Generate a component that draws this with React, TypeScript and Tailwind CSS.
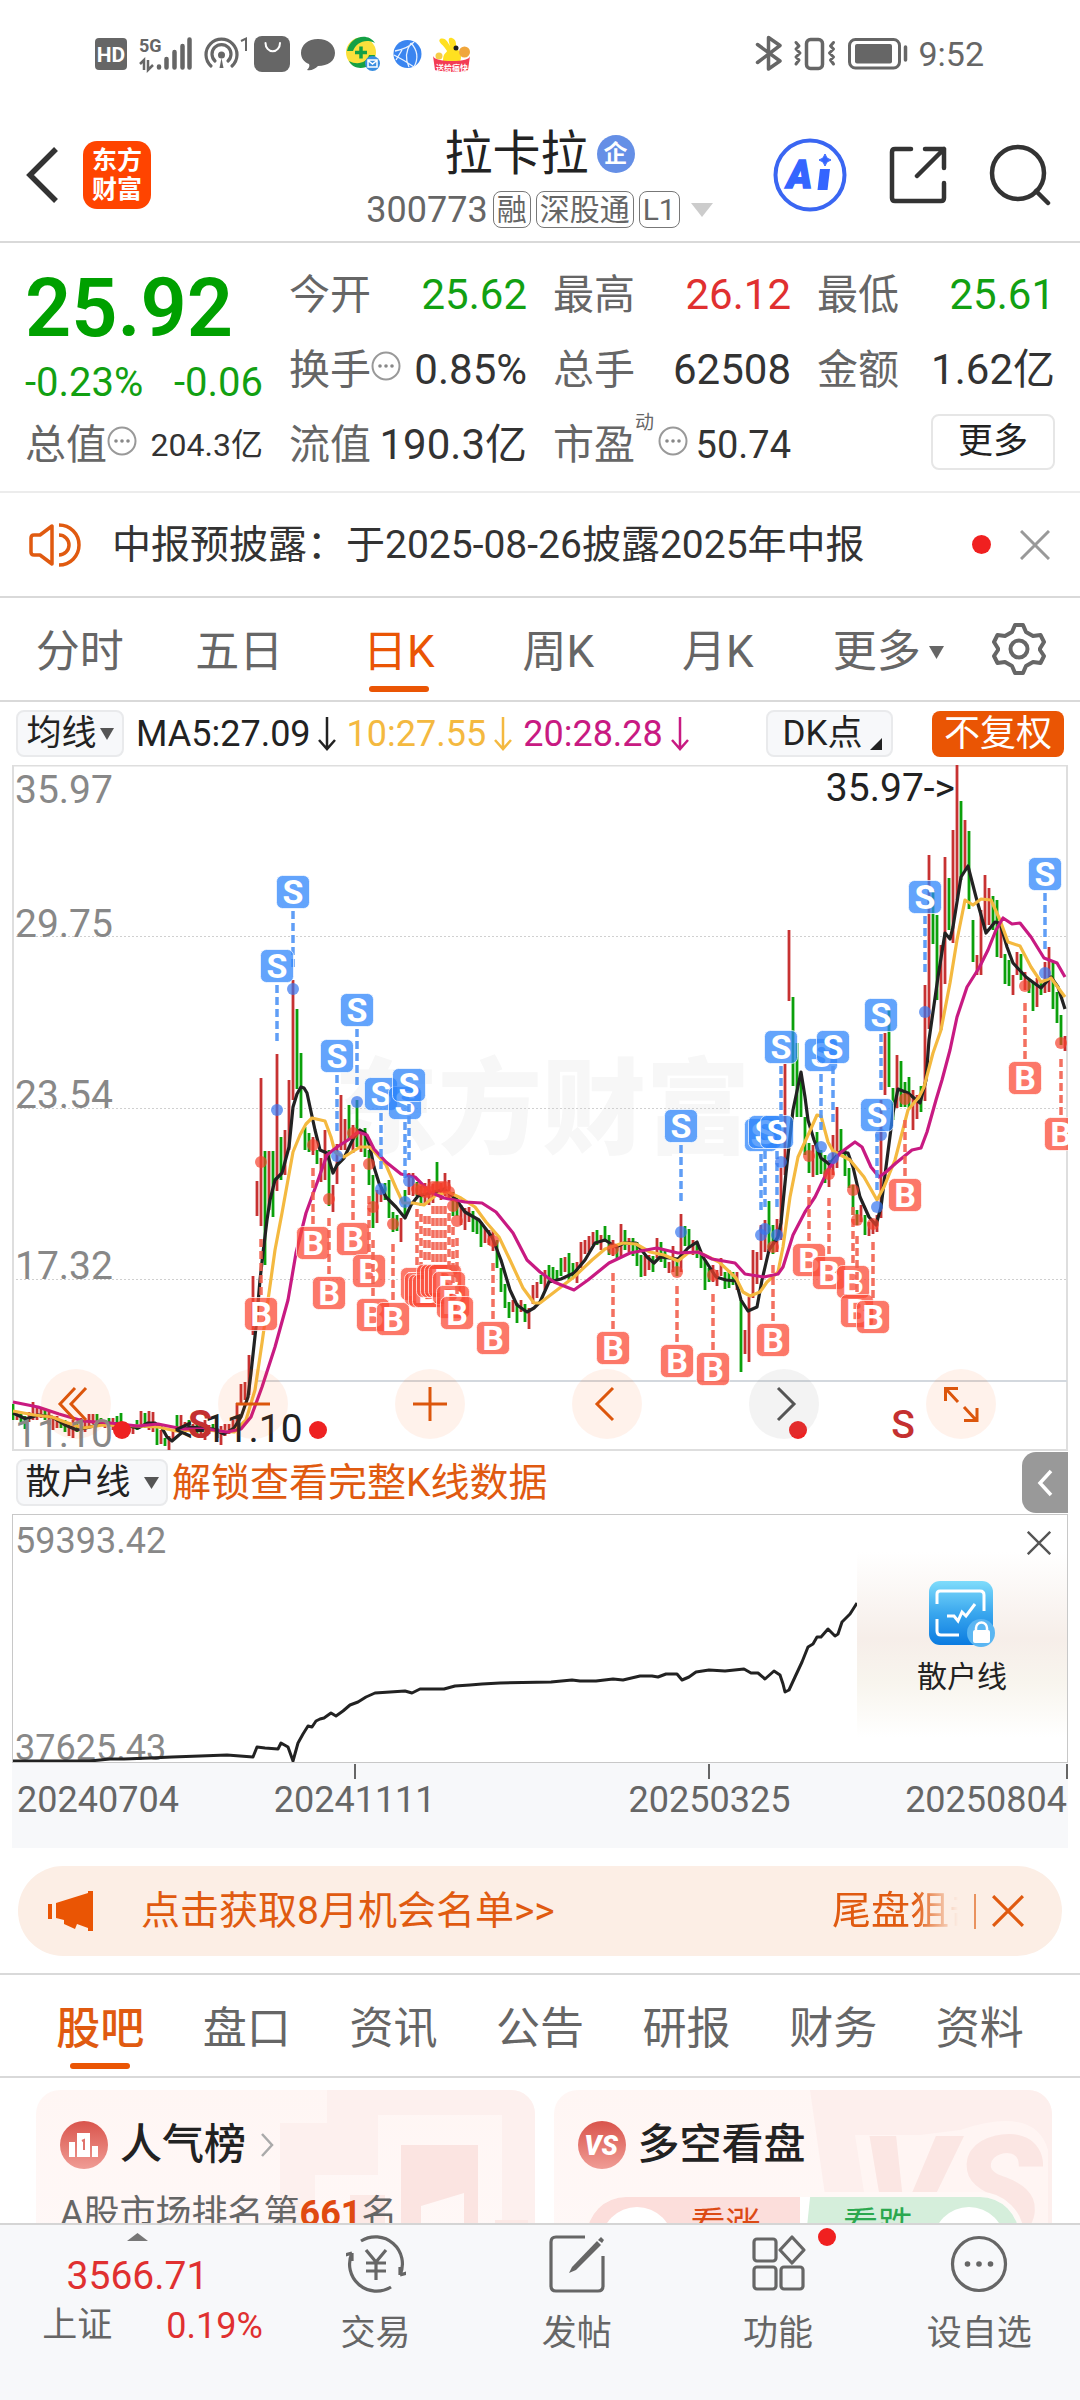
import React from "react";
import type { ReactNode } from "react";

/* ---------- K-line data: x, high, low, direction ---------- */
const CANDLES =
  "13,1404,1420,g 17,1412,1420,r 21,1412,1422,g 25,1416,1429,g 29,1412,1422,r 33,1402,1420,r 37,1408,1420,r 41,1407,1418,r 45,1410,1420,g 49,1412,1425,r 53,1418,1430,r 57,1416,1428,r 61,1420,1428,g 65,1420,1432,g 69,1422,1436,r 73,1420,1438,r 77,1424,1432,g 81,1418,1430,r 85,1420,1432,r 89,1414,1428,r 93,1414,1424,r 97,1414,1426,g 101,1418,1426,g 105,1420,1428,r 109,1418,1426,g 113,1418,1430,r 117,1416,1428,g 121,1413,1430,g 125,1422,1432,r 129,1424,1432,r 133,1426,1434,r 137,1420,1430,g 141,1411,1426,r 145,1413,1428,g 149,1411,1430,r 153,1412,1432,r 157,1425,1445,g 161,1430,1444,r 165,1438,1446,g 169,1436,1450,r 173,1430,1440,r 177,1415,1430,g 181,1415,1430,r 185,1422,1434,r 189,1420,1432,g 193,1424,1432,r 197,1422,1434,g 201,1424,1438,r 205,1420,1440,r 209,1425,1434,r 213,1424,1432,g 217,1428,1438,r 221,1426,1445,r 225,1424,1436,r 229,1424,1434,r 233,1420,1430,r 237,1403,1424,r 241,1384,1404,r 245,1382,1400,r 249,1355,1395,r 253,1276,1335,r 257,1181,1216,r 261,1078,1226,r 265,1151,1265,g 269,1151,1210,r 273,1151,1217,g 277,1054,1191,r 281,1137,1180,g 285,1130,1175,r 289,1080,1150,r 293,980,1100,r 297,1009,1089,g 301,1053,1118,g 305,1127,1150,g 309,1133,1152,g 313,1137,1155,r 317,1150,1164,g 321,1158,1182,r 325,1130,1180,r 329,1150,1206,g 333,1185,1212,r 337,1144,1184,r 341,1095,1150,r 345,1119,1150,r 349,1105,1140,g 353,1125,1153,r 357,1100,1147,g 361,1130,1152,r 365,1128,1157,g 369,1150,1185,g 373,1175,1228,g 377,1190,1223,r 381,1188,1202,r 385,1183,1200,g 389,1180,1218,g 393,1212,1232,g 397,1215,1231,g 401,1218,1242,r 405,1190,1218,g 409,1173,1195,r 413,1173,1196,r 417,1182,1196,g 421,1186,1206,g 425,1183,1204,r 429,1179,1205,r 433,1184,1203,r 437,1162,1195,g 441,1183,1200,r 445,1173,1196,r 449,1180,1200,r 453,1192,1216,g 457,1198,1216,g 461,1205,1225,r 465,1208,1230,r 469,1207,1222,r 473,1211,1232,g 477,1220,1234,g 481,1222,1247,g 485,1228,1243,r 489,1230,1245,r 493,1230,1251,r 497,1240,1268,g 501,1268,1292,g 505,1284,1308,g 509,1302,1318,g 513,1300,1312,r 517,1303,1323,g 521,1300,1312,r 525,1304,1322,g 529,1308,1329,r 533,1285,1304,r 537,1282,1298,r 541,1275,1284,g 545,1270,1290,r 549,1265,1282,g 553,1267,1282,g 557,1270,1280,g 561,1258,1276,g 565,1257,1272,r 569,1253,1280,g 573,1263,1278,g 577,1262,1283,r 581,1242,1268,r 585,1240,1254,r 589,1236,1252,r 593,1232,1245,r 597,1230,1245,g 601,1235,1250,r 605,1226,1242,g 609,1235,1255,g 613,1240,1256,r 617,1244,1258,g 621,1224,1256,r 625,1230,1250,g 629,1238,1252,r 633,1238,1256,g 637,1242,1266,g 641,1255,1277,g 645,1256,1276,r 649,1255,1270,r 653,1256,1272,g 657,1238,1258,r 661,1242,1262,g 665,1250,1268,g 669,1262,1273,r 673,1246,1272,r 677,1258,1276,g 681,1214,1272,r 685,1226,1246,g 689,1229,1248,g 693,1240,1255,r 697,1242,1258,g 701,1255,1268,g 705,1260,1290,g 709,1268,1282,g 713,1265,1282,r 717,1270,1286,r 721,1258,1276,r 725,1272,1289,g 729,1270,1288,g 733,1272,1285,g 737,1272,1290,r 741,1300,1372,g 745,1330,1354,r 749,1297,1362,r 753,1250,1298,r 757,1252,1284,r 761,1225,1260,r 765,1220,1252,r 769,1201,1250,g 773,1225,1254,g 777,1219,1252,r 781,1168,1240,r 785,1064,1175,r 789,930,1001,r 793,997,1086,g 797,1043,1117,g 801,1080,1117,g 805,1117,1155,g 809,1143,1173,g 813,1145,1177,r 817,1132,1175,g 821,1150,1174,g 825,1155,1183,g 829,1160,1187,r 833,1135,1175,r 837,1107,1168,r 841,1129,1152,g 845,1150,1176,g 849,1168,1188,g 853,1185,1215,g 857,1210,1225,g 861,1205,1222,r 865,1215,1235,g 869,1222,1236,r 873,1220,1234,r 877,1215,1232,r 881,1100,1218,r 885,1033,1095,r 889,1010,1087,g 893,1088,1120,g 897,1055,1108,r 901,1061,1107,g 905,1082,1107,g 909,1077,1108,g 913,1090,1130,r 917,1095,1119,r 921,1086,1112,g 925,985,1101,r 929,855,1029,r 933,890,944,g 937,915,1000,g 941,945,1030,r 945,857,984,r 949,878,930,g 953,830,943,r 957,765,900,r 961,801,880,g 965,820,870,r 969,831,909,g 973,920,962,g 977,955,975,r 981,910,975,r 985,875,930,r 989,888,925,r 993,896,930,g 997,900,957,g 1001,925,958,r 1005,954,984,g 1009,960,986,g 1013,975,995,r 1017,952,975,r 1021,954,980,g 1025,972,990,r 1029,980,993,g 1033,982,1011,g 1037,978,1007,r 1041,980,995,g 1045,962,993,r 1049,947,992,r 1053,961,1009,g 1057,992,1023,g 1061,1015,1045,g 1065,1036,1051,r";

const MA5 =
  "13,1413 26,1419 38,1415 52,1417 65,1425 77,1430 90,1427 103,1423 120,1424 138,1428 148,1423 155,1423 162,1428 167,1437 172,1441 179,1435 189,1427 203,1428 213,1429 224,1434 234,1428 241,1417 248,1397 251,1373 256,1327 260,1280 263,1253 267,1220 270,1200 275,1180 282,1173 289,1147 293,1107 297,1094 301,1087 304,1088 307,1093 310,1107 315,1130 320,1150 327,1153 333,1173 337,1165 344,1158 355,1135 360,1130 365,1133 370,1147 374,1167 379,1183 386,1197 396,1207 405,1218 411,1205 418,1196 430,1193 444,1189 455,1198 465,1212 479,1220 492,1237 501,1260 510,1290 517,1305 527,1312 534,1308 540,1302 549,1282 561,1279 574,1273 585,1260 595,1243 605,1240 616,1247 624,1243 636,1243 647,1257 654,1263 660,1257 678,1259 688,1248 697,1242 703,1257 716,1277 726,1280 736,1281 741,1300 748,1311 757,1307 762,1280 769,1250 778,1237 781,1223 786,1173 793,1110 801,1072 805,1097 808,1120 814,1140 821,1158 829,1164 840,1152 848,1153 853,1167 860,1197 869,1217 876,1225 881,1207 886,1167 893,1113 898,1089 908,1093 920,1103 926,1080 929,1040 938,977 945,933 950,939 953,927 961,877 968,866 976,897 986,933 995,922 1000,923 1007,947 1013,963 1026,977 1034,983 1041,988 1051,977 1058,987 1065,1009";
const MA10 =
  "13,1411 34,1415 52,1417 65,1422 83,1428 103,1425 138,1426 158,1427 176,1431 203,1430 234,1432 246,1420 255,1390 262,1343 269,1293 275,1250 282,1213 293,1152 300,1135 306,1124 312,1118 325,1121 331,1137 335,1152 344,1157 360,1147 370,1147 379,1157 386,1165 396,1188 403,1203 413,1203 424,1205 436,1195 448,1192 461,1198 475,1207 486,1222 499,1237 510,1260 523,1288 534,1303 540,1303 557,1290 574,1277 592,1260 605,1249 623,1243 636,1244 650,1252 664,1255 678,1261 688,1253 698,1252 719,1262 736,1278 743,1292 750,1296 760,1292 767,1282 778,1272 783,1247 790,1197 798,1157 809,1133 817,1115 821,1116 828,1142 833,1151 850,1160 864,1177 877,1200 884,1187 895,1160 908,1110 919,1097 924,1087 933,1053 941,1030 950,983 957,940 965,900 973,905 981,899 991,900 1000,920 1008,942 1020,946 1031,967 1041,982 1051,978 1065,997";
const MA20 =
  "13,1402 38,1407 59,1414 83,1421 110,1423 138,1426 158,1424 183,1429 207,1429 227,1432 241,1429 251,1417 262,1387 275,1347 288,1300 296,1253 306,1213 317,1183 327,1155 337,1147 348,1140 358,1132 367,1135 374,1149 386,1162 401,1174 415,1177 430,1192 444,1198 465,1202 482,1203 496,1212 513,1233 527,1260 540,1272 554,1282 574,1290 588,1280 609,1263 630,1253 657,1248 678,1253 698,1252 712,1259 735,1263 745,1274 764,1277 778,1274 783,1267 793,1235 805,1212 815,1197 828,1170 840,1153 855,1142 862,1147 871,1167 879,1177 886,1172 896,1163 912,1150 921,1148 927,1132 936,1100 942,1080 950,1050 957,1017 967,987 979,968 988,950 996,930 1003,918 1012,924 1020,923 1031,937 1044,958 1057,963 1065,977";
const RETAIL_LINE =
  "13,1761 90,1761 110,1759 124,1759 150,1758 172,1757 200,1756 227,1755 240,1756 253,1757 257,1747 265,1748 278,1749 281,1743 288,1747 293,1761 298,1743 303,1734 308,1726 312,1727 316,1721 320,1719 324,1718 331,1713 336,1716 343,1711 350,1705 358,1702 366,1697 375,1693 390,1692 405,1691 412,1693 420,1689 444,1689 455,1686 470,1685 482,1684 500,1683 551,1682 572,1680 580,1681 596,1681 613,1679 623,1680 640,1676 652,1676 658,1677 666,1674 677,1674 682,1680 689,1677 696,1672 709,1670 725,1671 744,1669 751,1673 758,1673 765,1679 774,1671 780,1675 783,1684 785,1692 789,1690 795,1677 802,1662 808,1647 813,1644 817,1637 821,1637 828,1629 831,1632 835,1636 838,1634 842,1622 850,1614 857,1603";

/* signal markers: x, centre of the badge, centre of the dot on the price */
const SELLS: number[][] = [
  [293, 892, 989], [277, 966, 1110], [357, 1010, 1102], [337, 1056, 1156], [381, 1094, 1189],
  [405, 1103, 1202], [409, 1085, 1181], [681, 1126, 1232], [761, 1135, 1235], [765, 1132, 1229],
  [777, 1132, 1235], [781, 1047, 1162], [821, 1055, 1147], [833, 1047, 1158], [881, 1015, 1135],
  [877, 1115, 1207], [925, 897, 1012], [1045, 874, 973],
];
const BUYS: number[][] = [
  [261, 1314, 1162], [313, 1243, 1145], [329, 1293, 1199], [353, 1239, 1133], [369, 1271, 1164],
  [373, 1315, 1207], [393, 1319, 1224], [417, 1284, 1189], [421, 1289, 1190], [425, 1291, 1192],
  [429, 1291, 1192], [433, 1281, 1187], [437, 1281, 1187], [441, 1281, 1187], [445, 1281, 1187],
  [449, 1288, 1192], [453, 1302, 1206], [457, 1313, 1221], [493, 1338, 1241], [613, 1348, 1249],
  [677, 1361, 1272], [713, 1369, 1275], [773, 1340, 1247], [809, 1260, 1156], [829, 1273, 1174],
  [853, 1282, 1190], [857, 1311, 1220], [873, 1317, 1224], [905, 1195, 1099], [1025, 1078, 986],
  [1061, 1134, 1043],
];

const candles = CANDLES.split(" ").map((c) => {
  const [x, top, bottom, dir] = c.split(",");
  return { x: Number(x), top: Number(top), bottom: Number(bottom), up: dir === "r" };
});

function Marker({ x, y, dot, kind }: { x: number; y: number; dot: number; kind: "S" | "B" }) {
  const sell = kind === "S";
  const lineFrom = sell ? y + 19 : y - 75;
  return (
    <g>
      <line x1={x} x2={x} y1={lineFrom} y2={lineFrom + 56} stroke={sell ? "#4f94f5" : "#f2604f"} strokeOpacity="0.9" strokeWidth="3.5" strokeDasharray="8 4" />
      <circle cx={x} cy={dot} r="6" fill={sell ? "#3575f0" : "#f5402c"} fillOpacity="0.7" />
      <rect x={x - 16.5} y={y - 16.5} width="33" height="33" rx="6" fill={sell ? "#2f86fb" : "#fb4b37"} fillOpacity="0.75" stroke="#fff" strokeOpacity="0.7" strokeWidth="1" />
      <text x={x} y={y + 12} textAnchor="middle" fontSize="34" fontWeight="700" fill="#fff">{kind}</text>
    </g>
  );
}

function KLineChart() {
  return (
    <svg viewBox="12 765 1056 686" className="block h-auto w-full" aria-label="日K线图">
      <text x="542" y="1146" textAnchor="middle" fontSize="104" fontWeight="900" fill="#f7f7f7">东方财富</text>
      <g stroke="#d0d0d0" strokeWidth="1" strokeDasharray="2 2">
        <line x1="12" x2="1067" y1="936.5" y2="936.5" />
        <line x1="12" x2="1067" y1="1108.5" y2="1108.5" />
        <line x1="12" x2="1067" y1="1279.5" y2="1279.5" />
      </g>
      <rect x="13" y="765.5" width="1054" height="684.5" fill="none" stroke="#dedede" strokeWidth="2" />
      <line x1="255" x2="1067" y1="1381" y2="1381" stroke="#d3d8de" strokeWidth="2" />
      {candles.map((c) => (
        <line key={c.x} x1={c.x} x2={c.x} y1={c.top} y2={c.bottom} stroke={c.up ? "#c73232" : "#0ba00b"} strokeWidth="2.8" />
      ))}
      <g fill="none" strokeWidth="3.2" strokeLinejoin="round">
        <polyline points={MA5} stroke="#222" />
        <polyline points={MA10} stroke="#f4b940" />
        <polyline points={MA20} stroke="#c81a82" />
      </g>
      <g fontSize="39" fill="#888">
        <text x="15" y="803">35.97</text>
        <text x="15" y="937">29.75</text>
        <text x="15" y="1108">23.54</text>
        <text x="15" y="1279">17.32</text>
        <text x="15" y="1447">11.10</text>
      </g>
      <text x="955" y="801" textAnchor="end" fontSize="39" fill="#222">35.97-&gt;</text>
      <text x="174" y="1442" fontSize="39" fill="#222">&lt;-11.10</text>
      {BUYS.map(([x, y, dot]) => <Marker key={x} x={x} y={y} dot={dot} kind="B" />)}
      {SELLS.map(([x, y, dot]) => <Marker key={x} x={x} y={y} dot={dot} kind="S" />)}
      <g fill="#c43030" fontSize="39" fontWeight="700" textAnchor="middle">
        <text x="200" y="1438">S</text>
        <text x="903" y="1438" fontWeight="500">S</text>
      </g>
      <g fill="#ee2222">
        <circle cx="122" cy="1430" r="9" />
        <circle cx="318" cy="1430" r="9" />
        <circle cx="798" cy="1430" r="9" />
      </g>
    </svg>
  );
}

const CHART_BUTTONS: { label: string; gray?: boolean; d: string }[] = [
  { label: "快速左移", d: "M34 19 19 35 34 51M45 19 30 35 45 51" },
  { label: "缩小", d: "M18 35H52" },
  { label: "放大", d: "M18 35H52M35 18V52" },
  { label: "左移", d: "M41 19 25 35 41 51" },
  { label: "右移", gray: true, d: "M29 19 45 35 29 51" },
  { label: "全屏", d: "M32 19.5H19.5V32M20 20 32 33M38 38 50 51M51 39V51.5H38" },
];

function Caret({ size = "h-[12px] w-[15px]" }: { size?: string }) {
  return (
    <svg viewBox="0 0 15 12" preserveAspectRatio="none" className={size} aria-hidden>
      <path d="M0 0H15L7.5 12Z" fill="currentColor" />
    </svg>
  );
}

function Cross({ className }: { className: string }) {
  return (
    <svg viewBox="0 0 30 30" className={className} fill="none" stroke="currentColor" strokeWidth="3" aria-hidden>
      <path d="M1 1 29 29M29 1 1 29" />
    </svg>
  );
}

function DownArrow() {
  return (
    <svg viewBox="0 0 18 34" className="h-[34px] w-[18px]" fill="none" stroke="currentColor" strokeWidth="2.5" aria-hidden>
      <path d="M9 0V32M1 23 9 32 17 23" />
    </svg>
  );
}

function InfoIcon() {
  return (
    <svg viewBox="0 0 30 30" className="mb-[8px] size-[30px] shrink-0" aria-hidden>
      <circle cx="15" cy="15" r="13.5" fill="none" stroke="#999" strokeWidth="2" />
      <g fill="#888"><circle cx="9" cy="15" r="1.8" /><circle cx="15" cy="15" r="1.8" /><circle cx="21" cy="15" r="1.8" /></g>
    </svg>
  );
}

function StatusBar() {
  return (
    <div className="flex h-[108px] shrink-0 items-center justify-between pr-[96px] pl-[95px] text-[#666]">
      <svg viewBox="95 35 380 38" className="h-[38px] w-[380px]" aria-label="状态图标">
        <rect x="95" y="38" width="32" height="32" rx="4" fill="#666" />
        <text x="111" y="62" textAnchor="middle" fontSize="21" fontWeight="700" fill="#fff">HD</text>
        <text x="139" y="52" fontSize="18" fontWeight="700" fill="#666">5G</text>
        <path d="M140 64 144 60V70M148 60V70L153 65" fill="none" stroke="#666" strokeWidth="2.5" />
        <path d="M159 66.5V67.5M166.5 59V67.5M174.500 52V67.5M182.5 46V67.5M189.5 39.5V67.5" fill="none" stroke="#666" strokeWidth="4.5" strokeLinecap="round" />
        <g fill="none" stroke="#666" strokeWidth="3.2" strokeLinecap="round">
          <path d="M211 66A15.5 15.5 0 1 1 232 66" />
          <path d="M215 61A9.5 9.5 0 1 1 228 61" />
        </g>
        <circle cx="221.5" cy="55" r="3.5" fill="#666" />
        <path d="M219.5 68 221.5 58 223.5 68Z" fill="#666" />
        <path d="M241 41 246 38.5V51" fill="none" stroke="#666" strokeWidth="2" />
        <rect x="254" y="36" width="36" height="36" rx="8" fill="#666" />
        <path d="M265.5 43A7 8 0 0 0 280 43" fill="none" stroke="#fff" strokeWidth="2" strokeLinecap="round" />
        <path d="M318 39C328 39 335 45 335 53S328 66 318 66C315 69 311 71 307 70C309 68 310 66 309 64C304 62 301 58 301 53 301 45 308 39 318 39Z" fill="#666" />
        <circle cx="361" cy="52.5" r="15" fill="#fbe03c" />
        <path d="M347 51C350 36 368 32 375 43C365 38 356 43 353 51ZM375 55C373 70 354 72 349 61C358 66 367 62 369 55Z" fill="#14a045" />
        <path d="M361 46.5V58.5M355 52.5H367" stroke="#14a045" strokeWidth="3.5" />
        <circle cx="372.5" cy="63.5" r="7.5" fill="#3a8ee0" />
        <path d="M368 60H377V67H368ZM368 60.500 372.5 64 377 60.5" fill="none" stroke="#fff" strokeWidth="1.5" />
        <circle cx="407.5" cy="54" r="14" fill="#3a85f0" />
        <path d="M395 51Q407 49 414 42M394 55Q404 60 414 67M411 43Q403 55 409 67M411 43Q421 54 414 67M396 60 402 50" fill="none" stroke="#e8f2ff" strokeWidth="1.3" />
        <path d="M443 62C443 52 446 54 447 51C444 45 437 42 440 39C446 37 448 43 450 46C449 42 447 37 452 38C458 40 455 47 457 49C463 53 461 62 459 62Z" fill="#ffe021" />
        <circle cx="456" cy="48" r="2.5" fill="#1e1e1e" />
        <circle cx="464.5" cy="52" r="5.5" fill="#f0a63c" />
        <circle cx="439" cy="56" r="3.5" fill="#f6cd48" />
        <path d="M433 56Q435 61 452 61T470 56L468 70Q466 72 452 72T435 70Z" fill="#f33c54" />
        <text x="452" y="71" textAnchor="middle" fontSize="8" fontWeight="700" fill="#fff">送给痛快</text>
      </svg>
      <div className="flex items-center gap-[9px]">
        <svg viewBox="755 36 154 38" className="h-[38px] w-[154px]" fill="none" stroke="#666" strokeWidth="3.5" strokeLinejoin="round" strokeLinecap="round" aria-label="蓝牙 振动 电量">
          <path d="M757.5 45.5 780 62 768.5 70V38.5L780 46.5 757.5 63.5" />
          <rect x="806.5" y="40.5" width="16" height="29" rx="4" />
          <path d="M796 43.5 799 47 796 50 800 54 796 58 799 61 796 65M833.5 43.5 830.5 47 833.5 50 829.5 54 833.5 58 830.5 61 833.5 65" strokeWidth="3" />
          <rect x="849.5" y="40.5" width="50" height="28.5" rx="6" strokeWidth="3" />
          <rect x="855" y="45" width="37" height="19.5" rx="2" fill="#666" stroke="none" />
          <path d="M905.5 48V61" />
        </svg>
        <span className="text-[34px] leading-[40px]">9:52</span>
      </div>
    </div>
  );
}

function Tag({ children }: { children: ReactNode }) {
  return <span className="flex h-[37px] items-center rounded-[8px] border border-[#777] px-[3px] text-[30px] leading-[34px]">{children}</span>;
}

function Header() {
  return (
    <header className="flex h-[135px] shrink-0 items-center border-b-2 border-[#d9d9d9] px-[26px] text-[#333]">
      <div className="flex w-[333px] items-center gap-[25px]">
        <button aria-label="返回">
          <svg viewBox="0 0 32 56" className="h-[56px] w-[32px]" fill="none" stroke="currentColor" strokeWidth="5.5"><path d="M30 2 4 28 30 54" /></svg>
        </button>
        <a href="#home" className="flex h-[68px] w-[68px] flex-col items-center justify-center rounded-[14px] bg-[#ff4400] text-[25px] leading-[29px] font-bold text-white">
          <span>东方</span>
          <span>财富</span>
        </a>
      </div>
      <div className="flex flex-1 flex-col items-center pt-[14px]">
        <h1 className="flex items-center gap-[8px] text-[48px] leading-[56px] text-[#222]">
          拉卡拉
          <span className="flex size-[38px] items-center justify-center rounded-full bg-[#658fe6] text-[24px] leading-[30px] font-bold text-white">企</span>
        </h1>
        <button className="flex h-[56px] items-center gap-[5px] whitespace-nowrap text-[#666]">
          <span className="text-[36px] leading-[44px]">300773</span>
          <Tag>融</Tag>
          <Tag>深股通</Tag>
          <Tag>L1</Tag>
          <span className="ml-[6px] text-[#ccc]"><Caret size="h-[14px] w-[22px]" /></span>
        </button>
      </div>
      <div className="flex w-[334px] items-center justify-end gap-[42px] pr-[3px]">
        <button aria-label="Ai">
          <svg viewBox="0 0 74 74" className="size-[74px]">
            <circle cx="37" cy="37" r="34.5" fill="none" stroke="#3a66f2" strokeWidth="4" />
            <text x="14" y="50" fontSize="38" fontWeight="900" fontStyle="italic" fill="#3465ff" stroke="#3465ff" strokeWidth="1.5">A</text>
            <path d="M47 31H57L54.5 52H44.5Z" fill="#3465ff" />
            <path d="M52 16Q53 21 58 22Q53 23 52 28Q51 23 46 22Q51 21 52 16Z" fill="#3465ff" stroke="#3465ff" />
          </svg>
        </button>
        <button aria-label="分享">
          <svg viewBox="0 0 58 58" className="size-[58px]" fill="none" stroke="currentColor" strokeWidth="4.5" strokeLinecap="round" strokeLinejoin="round">
            <path d="M22 3H6Q3 3 3 6V52Q3 55 6 55H52Q55 55 55 52V37M36 3H55V22M55 3 28 30" />
          </svg>
        </button>
        <button aria-label="搜索">
          <svg viewBox="0 0 62 62" className="size-[62px]" fill="none" stroke="currentColor" strokeWidth="4.5" strokeLinecap="round">
            <circle cx="29" cy="29" r="26" /><path d="M47 47 59 59" />
          </svg>
        </button>
      </div>
    </header>
  );
}

function Quote({ label, value, color = "text-[#333]", size = "text-[42px]", info, sup }: { label: string; value: string; color?: string; size?: string; info?: boolean; sup?: string }) {
  return (
    <div className="flex h-[75px] items-center justify-between whitespace-nowrap leading-[50px]">
      <span className="flex items-center text-[41px] text-[#666]">
        {label}
        {sup && <sup className="mb-[24px] w-[23px] text-[19px] leading-[20px]">{sup}</sup>}
        {info && <InfoIcon />}
      </span>
      <span className={size + " " + color}>{value}</span>
    </div>
  );
}

function QuotePanel() {
  return (
    <section className="grid h-[250px] shrink-0 grid-cols-4 gap-x-[26px] border-b-2 border-[#ececec] px-[25px] pt-[14px]">
      <div>
        <div className="flex h-[94px] items-end text-[81px] leading-[84px] font-semibold text-[#00a000]">25.92</div>
        <div className="flex h-[56px] items-center justify-between pt-[8px] text-[40px] leading-[48px] whitespace-nowrap text-[#12a012]">
          <span>-0.23%</span><span>-0.06</span>
        </div>
        <Quote label="总值" value="204.3亿" size="text-[32px]" info />
      </div>
      <div>
        <Quote label="今开" value="25.62" color="text-[#12a012]" />
        <Quote label="换手" value="0.85%" info />
        <Quote label="流值" value="190.3亿" />
      </div>
      <div>
        <Quote label="最高" value="26.12" color="text-[#e03030]" />
        <Quote label="总手" value="62508" />
        <Quote label="市盈" value="50.74" size="text-[38px]" sup="动" info />
      </div>
      <div>
        <Quote label="最低" value="25.61" color="text-[#12a012]" />
        <Quote label="金额" value="1.62亿" />
        <div className="flex h-[70px] items-center justify-end">
          <button className="h-[56px] w-[124px] rounded-[8px] border-2 border-[#e6e6e6] text-[35px] leading-[44px] text-[#222]">更多</button>
        </div>
      </div>
    </section>
  );
}

function Notice() {
  return (
    <section className="flex h-[105px] shrink-0 items-center border-b-2 border-[#d9d9d9] pr-[30px] pl-[29px]">
      <svg viewBox="0 0 52 44" className="h-[44px] w-[52px]" fill="none" stroke="#e05a10" strokeWidth="3.5" aria-hidden>
        <path d="M23 3V41L11 32H5Q2 32 2 29V15Q2 12 5 12H11Z" strokeLinejoin="round" />
        <path d="M30 2A20 20 0 0 1 30 42M30 12A10 10 0 0 1 30 32" />
      </svg>
      <a href="#notice" className="ml-[31px] flex-1 text-[39px] leading-[50px] whitespace-nowrap text-[#333]">中报预披露：于2025-08-26披露2025年中报</a>
      <span className="size-[19px] rounded-full bg-[#f02020]" />
      <button aria-label="关闭公告" className="ml-[29px] text-[#999]"><Cross className="size-[30px]" /></button>
    </section>
  );
}

const PERIODS = ["分时", "五日", "日K", "周K", "月K", "更多"];

function PeriodTabs() {
  return (
    <nav className="flex h-[104px] shrink-0 border-b-2 border-[#d9d9d9] text-[44px] leading-[56px] text-[#666]">
      {PERIODS.map((p, i) => (
        <button key={p} className={i === 2 ? "relative flex flex-1 items-center justify-center pt-[6px] text-[#ea5504]" : "relative flex flex-1 items-center justify-center pt-[6px]"}>
          {i === 5 ? <span className="flex items-center gap-[8px] pl-[22px]">{p}<Caret size="h-[13px] w-[15px]" /></span> : p}
          {i === 2 && <span className="absolute bottom-[8px] left-1/2 h-[6px] w-[60px] -translate-x-1/2 rounded-full bg-[#ea5504]" />}
        </button>
      ))}
      <button aria-label="设置" className="flex w-[123px] items-center justify-center">
        <svg viewBox="0 0 54 54" className="size-[54px]" fill="none" stroke="currentColor" strokeWidth="4" strokeLinejoin="round">
          <path d="M23 3H31L34 10 41 14 48.5 13 52 20 48 26.5V28L52 34 48.5 41 41 40 34 44 31 51H23L20 44 13 40 5.5 41 2 34 6 28V26.5L2 20 5.5 13 13 14 20 10Z" />
          <circle cx="27" cy="27" r="8.5" />
        </svg>
      </button>
    </nav>
  );
}

function MaRow() {
  return (
    <div className="flex h-[63px] shrink-0 items-center px-[16px] text-[36px] leading-[42px] whitespace-nowrap">
      <button className="flex h-[47px] w-[108px] items-center justify-center gap-[3px] rounded-[8px] border-2 border-[#e9eaec] bg-[#f7f8fa] text-[35px] text-[#222]">
        均线<span className="text-[#555]"><Caret size="h-[12px] w-[14px]" /></span>
      </button>
      <div className="ml-[12px] flex flex-1 items-center">
        <span className="flex items-center gap-[7px] text-[#222]">MA5:27.09<DownArrow /></span>
        <span className="ml-[11px] flex items-center gap-[8px] text-[#f4b940]">10:27.55<DownArrow /></span>
        <span className="ml-[11px] flex items-center gap-[8px] text-[#c81a82]">20:28.28<DownArrow /></span>
      </div>
      <button className="flex h-[47px] w-[127px] items-center justify-center gap-[8px] rounded-[8px] border-2 border-[#e9eaec] bg-[#f7f8fa] pl-[6px] text-[35px] text-[#222]">
        DK点
        <svg viewBox="0 0 12 12" className="mt-[20px] size-[12px]" aria-hidden><path d="M12 0V12H0Z" fill="#222" /></svg>
      </button>
      <button className="ml-[39px] h-[46px] w-[132px] rounded-[8px] bg-[#ea5504] text-white">不复权</button>
    </div>
  );
}

function LockedChart() {
  return (
    <section className="mx-[12px] shrink-0">
      <div className="relative border border-[#c8c8c8]">
        <svg viewBox="13 1515 1054 247" className="block h-auto w-full" aria-label="散户线图">
          <g fontSize="36" fill="#888">
            <text x="15" y="1553">59393.42</text>
            <text x="15" y="1760">37625.43</text>
          </g>
          <polyline points={RETAIL_LINE} fill="none" stroke="#222" strokeWidth="3" strokeLinejoin="round" />
        </svg>
        <div className="absolute inset-y-0 right-0 flex w-[210px] flex-col items-center bg-[linear-gradient(180deg,#ffffff_15%,#f6eee9_50%,#f8f5ee_68%,#ffffff_90%)] pt-[66px]">
          <button aria-label="关闭散户线" className="absolute top-[16px] right-[16px] text-[#555]"><Cross className="size-[24px]" /></button>
          <svg viewBox="0 0 68 66" className="h-[66px] w-[68px]" aria-hidden>
            <defs>
              <linearGradient id="lockIcon" x1="0" y1="0" x2="0" y2="1"><stop offset="0" stopColor="#7fdcfb" /><stop offset="0.5" stopColor="#3aa7ee" /><stop offset="1" stopColor="#0b7be0" /></linearGradient>
            </defs>
            <rect x="1" y="0" width="64" height="64" rx="11" fill="url(#lockIcon)" />
            <path d="M9 23V13Q9 10 12 10H52Q56 10 56 14V30M9 38V50Q9 54 13 54H31" fill="none" stroke="#fff" strokeWidth="3" />
            <path d="M19 35H26L30 40 34 31 38 35 47 23" fill="none" stroke="#fff" strokeWidth="3" />
            <circle cx="53" cy="52" r="14" fill="#5bb6f2" />
            <path d="M48 50V47A5.5 5.5 0 0 1 59 47V50" fill="none" stroke="#fff" strokeWidth="2.5" />
            <rect x="45" y="49" width="17" height="13" rx="2" fill="#fff" />
          </svg>
          <span className="mt-[12px] text-[30px] leading-[36px] text-[#222]">散户线</span>
        </div>
      </div>
      <div className="relative flex h-[85px] justify-between bg-[#f7f8fa] pt-[16px] pr-[1px] pl-[5px] text-[36px] leading-[42px] text-[#666]">
        <span>20240704</span>
        <span className="absolute top-[1px] left-[32.4%] flex w-[1px] flex-col items-center">
          <i className="h-[15px] w-[2px] bg-[#666]" /><span className="whitespace-nowrap">20241111</span>
        </span>
        <span className="absolute top-[1px] left-[66%] flex w-[1px] flex-col items-center">
          <i className="h-[15px] w-[2px] bg-[#666]" /><span className="whitespace-nowrap">20250325</span>
        </span>
        <i className="absolute top-[1px] right-0 h-[15px] w-[2px] bg-[#666]" />
        <span>20250804</span>
      </div>
    </section>
  );
}

function Banner() {
  return (
    <section className="mx-[18px] mt-[18px] flex h-[90px] shrink-0 items-center rounded-full bg-[#fceee5] pr-[38px] pl-[30px] text-[39px] leading-[50px] whitespace-nowrap text-[#e05a10]">
      <svg viewBox="0 0 46 40" className="h-[40px] w-[46px]" fill="#ea5504" aria-hidden>
        <path d="M0 13H4V28H0ZM8 12 40 2V0H45V40H40V37L29 33 27 38 16 33V29L8 27Z" />
      </svg>
      <a href="#list" className="ml-[47px] flex-1">点击获取8月机会名单&gt;&gt;</a>
      <a href="#tail" className="w-[126px] overflow-hidden [mask-image:linear-gradient(90deg,#000_65%,transparent_100%)]">尾盘狙击</a>
      <i className="ml-[16px] h-[35px] w-[2px] bg-[#e9925f]" />
      <button aria-label="关闭横幅" className="ml-[16px]"><Cross className="size-[32px]" /></button>
    </section>
  );
}

const INFO_TABS = ["股吧", "盘口", "资讯", "公告", "研报", "财务", "资料"];

function InfoTabs() {
  return (
    <nav className="mt-[17px] flex h-[105px] shrink-0 border-y-2 border-[#d9d9d9] px-[27px] text-[44px] leading-[56px] text-[#666]">
      {INFO_TABS.map((t, i) => (
        <button key={t} className={i === 0 ? "relative flex-1 pt-[6px] font-medium text-[#e05a10]" : "relative flex-1 pt-[6px]"}>
          {t}
          {i === 0 && <span className="absolute bottom-[7px] left-1/2 h-[6px] w-[60px] -translate-x-1/2 rounded-full bg-[#ea5504]" />}
        </button>
      ))}
    </nav>
  );
}

function Cards() {
  return (
    <section className="flex min-h-0 flex-1 gap-[19px] overflow-hidden pt-[12px] pr-[28px] pl-[36px]">
      <article className="relative h-[300px] flex-1 overflow-hidden rounded-[24px] bg-[linear-gradient(180deg,#fff6f4,#fffafa)] px-[24px] pt-[26px]">
        <svg viewBox="0 0 255 140" className="absolute top-0 right-0 h-[140px] w-[255px]" aria-hidden>
          <path d="M0 33H47V0H255V140H222V25H98V85H35V140H0Z" fill="#fdf0ee" />
          <path d="M121 55H198V140H184V103L141 116V140H121Z" fill="#fbe4e1" />
          <path d="M70 105H105V140H70ZM215 130H248V140H215Z" fill="#fce9e6" />
        </svg>
        <div className="relative flex h-[58px] items-center">
          <svg viewBox="0 0 48 48" className="size-[48px]" aria-hidden>
            <defs>
              <linearGradient id="badge" x1="0" y1="0" x2="0" y2="1"><stop offset="0" stopColor="#d9544c" /><stop offset="1" stopColor="#f09c95" /></linearGradient>
            </defs>
            <circle cx="24" cy="24" r="24" fill="url(#badge)" />
            <path d="M9 21H15V36H9ZM17 12H30V36H17ZM32 25H38V36H32Z" fill="#fff" />
            <path d="M22 20 24 19V29" fill="none" stroke="#e0726b" strokeWidth="2" />
          </svg>
          <h2 className="ml-[12px] text-[42px] leading-[58px] font-medium text-[#222]">人气榜</h2>
          <svg viewBox="0 0 14 26" className="ml-[14px] h-[26px] w-[14px]" fill="none" stroke="#aaa" strokeWidth="2.5" aria-hidden><path d="M2 2 12 13 2 24" /></svg>
        </div>
        <p className="relative mt-[15px] text-[36px] leading-[50px] whitespace-nowrap text-[#666]">A股市场排名第<b className="text-[#e04a10]">661</b>名</p>
      </article>
      <article className="relative h-[300px] flex-1 overflow-hidden rounded-[24px] bg-[linear-gradient(180deg,#fff6f4,#fffafa)] px-[24px] pt-[26px]">
        <svg viewBox="0 0 242 140" className="absolute top-0 right-0 h-[140px] w-[242px]" aria-hidden>
          <path d="M0 0H242V140H20Z" fill="#fdefed" />
          <path d="M45 45H110L150 40Q225 15 238 60V140H60Z" fill="#fff5f3" />
          <text x="50" y="150" fontSize="146" fontWeight="900" fontStyle="italic" fill="#fbe6e3">VS</text>
        </svg>
        <div className="relative flex h-[58px] items-center">
          <svg viewBox="0 0 48 48" className="size-[48px]" aria-hidden>
            <circle cx="24" cy="24" r="24" fill="url(#badge)" />
            <text x="23" y="34" textAnchor="middle" fontSize="27" fontWeight="900" fontStyle="italic" fill="#fff">VS</text>
          </svg>
          <h2 className="ml-[12px] text-[42px] leading-[58px] font-medium text-[#222]">多空看盘</h2>
        </div>
        <div className="relative mx-[4px] mt-[18px] flex h-[88px] overflow-hidden rounded-full border-[5px] border-[#fff8f6] bg-white text-[35px] leading-[50px]">
          <button className="flex flex-1 items-start gap-[18px] bg-[#fcdedb] pt-[4px] pl-[14px] text-[#dc4a14]">
            <span className="mt-[6px] size-[72px] rounded-full bg-white" />看涨
          </button>
          <i className="w-[6px] -skew-x-6 bg-white" />
          <button className="flex flex-1 items-start justify-end gap-[20px] bg-[#d5eedb] pt-[4px] pr-[14px] text-[#2ba84e]">
            看跌<span className="mt-[6px] size-[72px] rounded-full bg-white" />
          </button>
        </div>
      </article>
    </section>
  );
}

function NavItem({ label, badge, children }: { label: string; badge?: boolean; children: ReactNode }) {
  return (
    <a href="#nav" className="relative flex flex-1 flex-col items-center pt-[9px]">
      <svg viewBox="0 0 60 60" className="size-[60px]" fill="none" stroke="#666" strokeWidth="3.2" strokeLinejoin="round" aria-hidden>{children}</svg>
      <span className="mt-[18px] text-[35px] leading-[44px]">{label}</span>
      {badge && <i className="absolute top-[3px] left-[70%] size-[18px] rounded-full bg-[#f02020]" />}
    </a>
  );
}

function BottomNav() {
  return (
    <nav className="flex h-[177px] shrink-0 border-t-2 border-[#d5d5d5] bg-[#f7f8fa] text-[#666]">
      <a href="#index" className="flex w-[275px] flex-col items-center whitespace-nowrap text-[#e03030]">
        <svg viewBox="0 0 21 8" className="mt-[8px] h-[8px] w-[21px]" aria-hidden><path d="M0 8 10.5 0 21 8Z" fill="#777" /></svg>
        <span className="mt-[10px] text-[39px] leading-[50px]">3566.71</span>
        <span className="flex items-center gap-[54px] pl-[30px] text-[36px] leading-[50px]"><span className="text-[35px] text-[#666]">上证</span>0.19%</span>
      </a>
      <NavItem label="交易">
        <path d="M15 7A27 27 0 0 1 54 41M54 41 61 39M54 41V33M45 53A27 27 0 0 1 6 19M6 19-1 21M6 19V27" />
        <path d="M20 16 30 28 40 16M30 28V46M20 29H40M20 37H40" />
      </NavItem>
      <NavItem label="发帖">
        <path d="M38 3H9Q4 3 4 8V52Q4 57 9 57H51Q56 57 56 52V22" />
        <path d="M25 33 50 7 54 11 29 36 22 39Z" fill="#666" stroke="none" /><path d="M51 6 54 3 57 6 55 9Z" fill="#666" stroke="none" />
      </NavItem>
      <NavItem label="功能" badge>
        <rect x="6" y="5" width="22" height="22" rx="3" /><rect x="6" y="33" width="22" height="22" rx="3" /><rect x="33" y="33" width="22" height="22" rx="3" />
        <path d="M44 3 56 16 44 29 32 16Z" />
      </NavItem>
      <NavItem label="设自选">
        <circle cx="30" cy="30" r="26.5" />
        <g fill="#666" stroke="none"><circle cx="18.5" cy="30" r="2.8" /><circle cx="30" cy="30" r="2.8" /><circle cx="41.5" cy="30" r="2.8" /></g>
      </NavItem>
    </nav>
  );
}

export default function App() {
  return (
    <div className="flex h-screen flex-col overflow-hidden bg-white font-[Roboto,'Noto_Sans_CJK_SC',sans-serif]">
      <StatusBar />
      <Header />
      <QuotePanel />
      <Notice />
      <PeriodTabs />
      <MaRow />
      <section className="relative mx-[12px] shrink-0">
        <KLineChart />
        <div className="absolute inset-x-0 bottom-[12px] flex justify-between pr-[72px] pl-[29px]">
          {CHART_BUTTONS.map((b) => (
            <button key={b.label} aria-label={b.label} className={b.gray ? "size-[70px] rounded-full bg-[#888]/10 text-[#555]" : "size-[70px] rounded-full bg-[#ff5500]/8 text-[#dc560c]"}>
              <svg viewBox="0 0 70 70" className="size-full" fill="none" stroke="currentColor" strokeWidth="3"><path d={b.d} /></svg>
            </button>
          ))}
        </div>
      </section>
      <div className="flex h-[63px] shrink-0 items-center pr-[12px] pl-[16px] whitespace-nowrap">
        <button className="flex h-[47px] w-[152px] items-center justify-center gap-[13px] rounded-[8px] border-2 border-[#e9eaec] bg-[#f7f8fa] text-[35px] leading-[42px] text-[#222]">
          散户线<span className="text-[#555]"><Caret /></span>
        </button>
        <a href="#unlock" className="ml-[4px] flex-1 text-[39px] leading-[50px] text-[#e05a10]">解锁查看完整K线数据</a>
        <button aria-label="展开" className="flex h-[61px] w-[46px] items-center justify-center rounded-l-[14px] bg-[#999]">
          <svg viewBox="0 0 16 28" className="h-[28px] w-[16px]" fill="none" stroke="#fff" strokeWidth="3.5" aria-hidden><path d="M14 2 3 14 14 26" /></svg>
        </button>
      </div>
      <LockedChart />
      <Banner />
      <InfoTabs />
      <Cards />
      <BottomNav />
    </div>
  );
}
